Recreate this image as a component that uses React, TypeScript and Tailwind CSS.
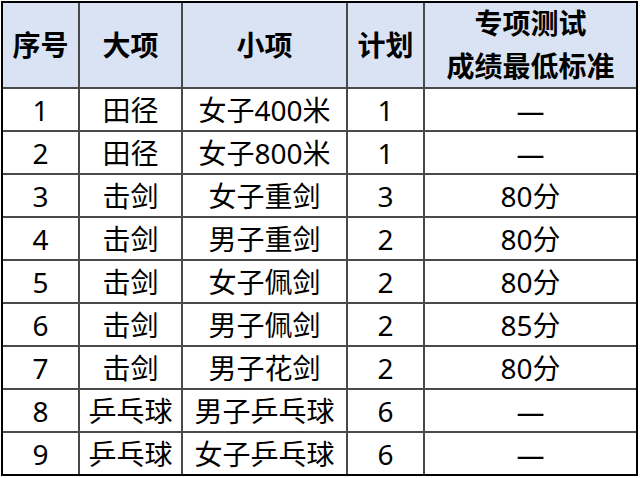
import React from "react";

const rows: [string, string, string, string, string][] = [
  ["1", "田径", "女子400米", "1", "—"],
  ["2", "田径", "女子800米", "1", "—"],
  ["3", "击剑", "女子重剑", "3", "80分"],
  ["4", "击剑", "男子重剑", "2", "80分"],
  ["5", "击剑", "女子佩剑", "2", "80分"],
  ["6", "击剑", "男子佩剑", "2", "85分"],
  ["7", "击剑", "男子花剑", "2", "80分"],
  ["8", "乒乓球", "男子乒乓球", "6", "—"],
  ["9", "乒乓球", "女子乒乓球", "6", "—"],
];

export default function App() {
  return (
    <div className="w-[640px] h-[478px] bg-white">
      <div
        className="ml-[1px] mt-[1px] w-[637px] border-2 border-black bg-[#4a4a4a] grid grid-cols-[75px_101px_163px_75px_211px] grid-rows-[84px_repeat(9,41px)] gap-[2px] text-black text-[28px]"
        style={{ fontFamily: '"Noto Sans", "Noto Sans CJK SC", sans-serif' }}
      >
        {["序号", "大项", "小项", "计划"].map((h) => (
          <div key={h} className="bg-[#dae3f3] flex items-center justify-center font-bold leading-none">
            {h}
          </div>
        ))}
        <div className="bg-[#dae3f3] flex flex-col items-center justify-center font-bold leading-[43px]">
          <div>专项测试</div>
          <div>成绩最低标准</div>
        </div>
        {rows.map((r) =>
          r.map((c, i) => (
            <div key={r[0] + "-" + i} className="bg-white flex items-center justify-center leading-none whitespace-nowrap">
              {c}
            </div>
          ))
        )}
      </div>
    </div>
  );
}
